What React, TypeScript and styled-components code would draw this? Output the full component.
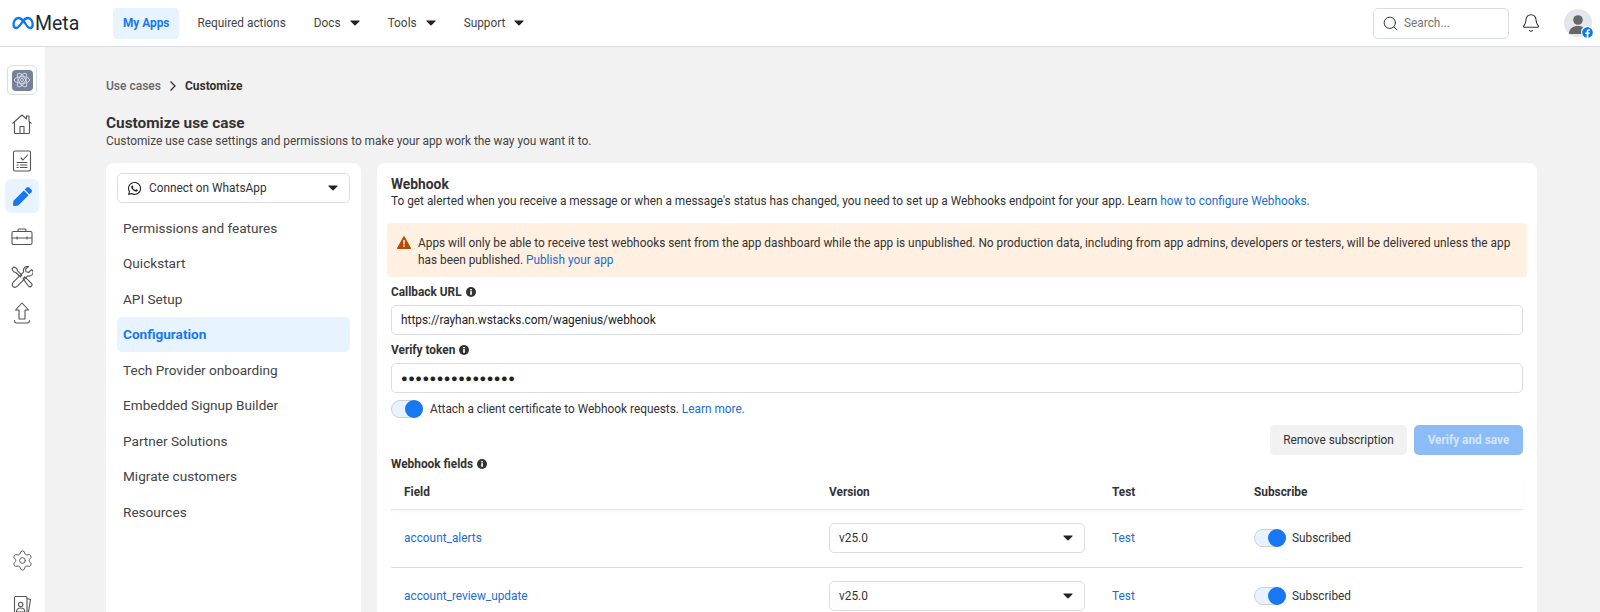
import styled, { createGlobalStyle } from 'styled-components';
import { Bell, Search, Settings } from 'lucide-react';
import { FaFacebook, FaPen, FaWhatsapp } from 'react-icons/fa';

const menuItems = [
  'Permissions and features',
  'Quickstart',
  'API Setup',
  'Configuration',
  'Tech Provider onboarding',
  'Embedded Signup Builder',
  'Partner Solutions',
  'Migrate customers',
  'Resources',
];

const fields = ['account_alerts', 'account_review_update'];

const GlobalStyle = createGlobalStyle`
  html, body {
    margin: 0;
    height: 100%;
    overflow: hidden;
    background: #f2f2f2;
  }
  * {
    box-sizing: border-box;
  }
  body {
    font-family: Roboto, 'Liberation Sans', sans-serif;
    color: #333;
  }
`;

const Caret = () => (
  <CaretIcon viewBox="0 0 12 7" width="10" height="6">
    <path d="M1 0.6h10c.5 0 .7.5.4.9L6.6 6.2c-.3.3-.9.3-1.2 0L.6 1.5C.3 1.1.5.6 1 .6z" fill="currentColor" />
  </CaretIcon>
);

const Info = () => (
  <InfoIcon viewBox="0 0 12 12" width="10" height="10">
    <circle cx="6" cy="6" r="6" fill="#333" />
    <rect x="5" y="5" width="2" height="4.4" fill="#fff" />
    <rect x="5" y="2.400" width="2" height="1.700" fill="#fff" />
  </InfoIcon>
);

const MetaLogo = () => (
  <LogoRow>
    <svg viewBox="0 0 22 14" width="22" height="14" fill="none">
      <path
        d="M6 2C3.500 2 1.500 5.500 1.500 8.500 1.500 10.800 2.700 12 4.300 12 6.500 12 8 9.500 11 5 13 2.300 14.300 2 16 2c2.800 0 4.700 3.500 4.700 6.700 0 2-1 3.300-2.700 3.300-2 0-3.500-2.500-5-5C10.500 3.500 8.500 2 6 2z"
        stroke="#0a78f0"
        strokeWidth="2.300"
        strokeLinejoin="round"
      />
    </svg>
    <LogoText>Meta</LogoText>
  </LogoRow>
);

const App = () => {
  return (
    <>
      <GlobalStyle />
      <Page>
        <TopBar>
          <MetaLogo />
          <Nav>
            <NavItem $active>My Apps</NavItem>
            <NavItem>Required actions</NavItem>
            <NavItem>
              Docs <Caret />
            </NavItem>
            <NavItem>
              Tools <Caret />
            </NavItem>
            <NavItem>
              Support <Caret />
            </NavItem>
          </Nav>
          <TopRight>
            <SearchBox>
              <Search size={17} strokeWidth={1.4} color="#333" />
              <span>Search...</span>
            </SearchBox>
            <Bell size={20} strokeWidth={1.3} color="#333" />
            <Avatar>
              <svg viewBox="0 0 28 28" width="28" height="28">
                <circle cx="14" cy="11" r="4.800" fill="#65676b" />
                <path d="M5 25c0-5.500 4-8 9-8s9 2.500 9 8z" fill="#65676b" />
              </svg>
              <AvatarBadge>
                <FaFacebook size={11} color="#0a78f0" />
              </AvatarBadge>
            </Avatar>
          </TopRight>
        </TopBar>
        <Body>
          <SideRail>
            <AppTile>
              <AppTileInner>
                <svg viewBox="0 0 20 20" width="18" height="18" fill="none" stroke="#d3d6de" strokeWidth="1.100">
                  <ellipse cx="10" cy="10" rx="8.500" ry="3.700" />
                  <ellipse cx="10" cy="10" rx="8.500" ry="3.700" transform="rotate(60 10 10)" />
                  <ellipse cx="10" cy="10" rx="8.500" ry="3.700" transform="rotate(120 10 10)" />
                  <circle cx="10" cy="10" r="1.700" />
                </svg>
              </AppTileInner>
            </AppTile>
            <RailList>
              <RailButton $after={3}>
                <svg viewBox="0 0 22 22" width="22" height="22" fill="none" stroke="#555" strokeWidth="1.100" strokeLinejoin="round">
                  <path d="M1.500 10.500 11 2l4.500 4V3h2.500v5.300l2.500 2.200" />
                  <path d="M3.500 9v10.500c0 .6.4 1 1 1h13c.6 0 1-.4 1-1V9" />
                  <path d="M9 20.500V13.500h4v7" />
                </svg>
              </RailButton>
              <RailButton $after={1}>
                <svg viewBox="0 0 22 22" width="22" height="22" fill="none" stroke="#555" strokeWidth="1.100" strokeLinecap="round" strokeLinejoin="round">
                  <rect x="2.500" y="1" width="17" height="20" rx="1.500" />
                  <path d="m10 8 2 2 4.500-5" />
                  <path d="M6 12.500h10M9.500 15h6.500M9.500 17.500h6.500M6 15h1.200M6 17.500h1.200" />
                </svg>
              </RailButton>
              <RailButton $active $after={7}>
                <FaPen size={19} color="#1877f2" />
              </RailButton>
              <RailButton $after={6}>
                <svg viewBox="0 0 22 22" width="22" height="22" fill="none" stroke="#555" strokeWidth="1.100" strokeLinejoin="round">
                  <rect x="1" y="5.500" width="20" height="13" rx="1.500" />
                  <path d="M7 5.500V4c0-.6.4-1 1-1h6c.6 0 1 .4 1 1v1.500" />
                  <path d="M1 12h20M6 10.500v3M16 10.500v3" />
                </svg>
              </RailButton>
              <RailButton $after={2}>
                <svg viewBox="0 0 22 22" width="22" height="22" fill="none" stroke="#555" strokeWidth="1.100" strokeLinejoin="round">
                  <path d="M2.800 1 1 2.800l1.500 3 2.300.7 4.400 4.400 1.700-1.700-4.400-4.400-.7-2.300z" />
                  <path d="m12 12.600 1.800-1.800 6.400 6.400c1 1 1 2.200.2 3s-2 .8-3-.2z" />
                  <path d="M20.500 3.600 17.600 6.500l-2.400-.7-.7-2.400 2.900-2.900c-2.500-.6-5 1.200-5 3.700 0 .6.100 1.100.3 1.600L2.600 15.900c-.5-.1.1 0 0 0-1.500 1.700-1.700 3.400-.6 4.600 1.200 1.200 3 .9 4.600-.6l10.100-10.100c.5.200 1 .3 1.600.3 2.500 0 4.300-2.500 3.700-5z" />
                </svg>
              </RailButton>
              <RailButton>
                <svg viewBox="0 0 22 22" width="22" height="22" fill="none" stroke="#555" strokeWidth="1.100" strokeLinejoin="round" strokeLinecap="round">
                  <path d="M11 1 4.500 8H8v9h6V8h3.500z" />
                  <path d="M3.500 18.500c0 1.500.8 2.500 2 2.500h11c1.200 0 2-1 2-2.500" />
                </svg>
              </RailButton>
            </RailList>
            <RailBottom>
              <RailButton>
                <Settings size={23} strokeWidth={1} color="#555" />
              </RailButton>
              <RailButton>
                <svg viewBox="0 0 22 22" width="22" height="22" fill="none" stroke="#555" strokeWidth="1.100" strokeLinejoin="round">
                  <path d="M16 3.500 19.500 4.500 17 20" />
                  <rect x="3.500" y="1.500" width="12.500" height="19.500" rx="1.200" />
                  <circle cx="9.700" cy="9.500" r="2.200" />
                  <path d="M5.500 17c0-2.500 1.800-4 4.200-4s4.200 1.500 4.200 4z" />
                </svg>
              </RailButton>
            </RailBottom>
          </SideRail>
          <Main>
            <Breadcrumb>
              <span>Use cases</span>
              <BreadcrumbChevron viewBox="0 0 8 12" width="8" height="12">
                <path d="m1.500 1.500 4.500 4.500-4.500 4.500" fill="none" stroke="#333" strokeWidth="1.300" />
              </BreadcrumbChevron>
              <strong>Customize</strong>
            </Breadcrumb>
            <PageTitle>Customize use case</PageTitle>
            <PageSubtitle>Customize use case settings and permissions to make your app work the way you want it to.</PageSubtitle>
            <Columns>
              <MenuCard>
                <UseCaseSelect>
                  <FaWhatsapp size={15} color="#222" />
                  <span>Connect on WhatsApp</span>
                  <Caret />
                </UseCaseSelect>
                <MenuList>
                  {menuItems.map((item) => (
                    <MenuItem key={item} $active={item === 'Configuration'}>
                      {item}
                    </MenuItem>
                  ))}
                </MenuList>
              </MenuCard>
              <ContentCard>
                <SectionTitle>Webhook</SectionTitle>
                <SectionText>
                  To get alerted when you receive a message or when a message's status has changed, you need to set up a
                  Webhooks endpoint for your app. Learn <Link>how to configure Webhooks</Link>.
                </SectionText>
                <Warning>
                  <svg viewBox="0 0 14 13" width="14" height="13">
                    <path d="M7 .5 13.700 12.500H.3z" fill="#b84a00" stroke="#b84a00" strokeLinejoin="round" />
                    <rect x="6.300" y="4" width="1.400" height="4.500" fill="#fff" />
                    <rect x="6.300" y="9.300" width="1.400" height="1.500" fill="#fff" />
                  </svg>
                  <p>
                    Apps will only be able to receive test webhooks sent from the app dashboard while the app is
                    unpublished. No production data, including from app admins, developers or testers, will be delivered
                    unless the app has been published. <Link>Publish your app</Link>
                  </p>
                </Warning>
                <FieldLabel>
                  Callback URL <Info />
                </FieldLabel>
                <TextBox>https://rayhan.wstacks.com/wagenius/webhook</TextBox>
                <FieldLabel>
                  Verify token <Info />
                </FieldLabel>
                <TextBox $secret>●●●●●●●●●●●●●●●●</TextBox>
                <CertRow>
                  <Toggle />
                  <span>
                    Attach a client certificate to Webhook requests. <Link>Learn more.</Link>
                  </span>
                </CertRow>
                <ButtonRow>
                  <GreyButton>Remove subscription</GreyButton>
                  <BlueButton>Verify and save</BlueButton>
                </ButtonRow>
                <FieldsLabel>
                  Webhook fields <Info />
                </FieldsLabel>
                <TableHead>
                  <span>Field</span>
                  <span>Version</span>
                  <span>Test</span>
                  <span>Subscribe</span>
                </TableHead>
                {fields.map((field) => (
                  <TableRow key={field}>
                    <Link>{field}</Link>
                    <VersionSelect>
                      <span>v25.0</span>
                      <Caret />
                    </VersionSelect>
                    <Link>Test</Link>
                    <SubscribeCell>
                      <Toggle />
                      <span>Subscribed</span>
                    </SubscribeCell>
                  </TableRow>
                ))}
              </ContentCard>
            </Columns>
          </Main>
        </Body>
      </Page>
    </>
  );
};

export default App;

const Page = styled.div`
  height: 100vh;
  display: flex;
  flex-direction: column;
  overflow: hidden;
`;

const TopBar = styled.header`
  flex: none;
  height: 47px;
  display: flex;
  align-items: center;
  padding: 0 8px 0 12px;
  background: #fff;
  border-bottom: 1px solid #dadde1;
`;

const LogoRow = styled.div`
  width: 101px;
  display: flex;
  align-items: center;
  gap: 1px;
`;

const LogoText = styled.span`
  font-size: 19.5px;
  font-weight: 400;
  color: #1c2b33;
`;

const Nav = styled.nav`
  display: flex;
  align-items: center;
  gap: 8px;
`;

const NavItem = styled.div<{ $active?: boolean }>`
  height: 31px;
  display: flex;
  align-items: center;
  gap: 9px;
  padding: 0 10px;
  border-radius: 4px;
  font-size: 11.85px;
  font-weight: ${(p) => (p.$active ? 700 : 400)};
  color: ${(p) => (p.$active ? '#1877f2' : '#444')};
  background: ${(p) => (p.$active ? '#e7f3ff' : 'transparent')};
`;

const CaretIcon = styled.svg`
  flex: none;
  color: #222;
`;

const TopRight = styled.div`
  margin-left: auto;
  display: flex;
  align-items: center;
`;

const SearchBox = styled.div`
  width: 136px;
  height: 31px;
  display: flex;
  align-items: center;
  gap: 5px;
  padding: 0 8px;
  margin-right: 12px;
  border: 1px solid #dadde1;
  border-radius: 5px;
  font-size: 11.85px;
  color: #777;
`;

const Avatar = styled.div`
  position: relative;
  width: 28px;
  height: 28px;
  margin-left: 23px;
  border-radius: 50%;
  background: #e4e6eb;
  svg {
    display: block;
  }
`;

const AvatarBadge = styled.span`
  position: absolute;
  right: -1px;
  bottom: -1px;
  width: 12px;
  height: 12px;
  display: flex;
  align-items: center;
  justify-content: center;
  border-radius: 50%;
  background: #fff;
`;

const Body = styled.div`
  flex: 1;
  min-height: 0;
  display: flex;
`;

const SideRail = styled.aside`
  flex: none;
  width: 45px;
  display: flex;
  flex-direction: column;
  align-items: flex-start;
  padding: 18px 0 0 5px;
  background: #fff;
`;

const AppTile = styled.div`
  width: 30px;
  height: 30px;
  margin-left: 2px;
  display: flex;
  align-items: center;
  justify-content: center;
  border: 1px solid #dadde1;
  border-radius: 5px;
`;

const AppTileInner = styled.div`
  width: 21px;
  height: 21px;
  display: flex;
  align-items: center;
  justify-content: center;
  border-radius: 4px;
  background: #78819b;
`;

const RailList = styled.div`
  display: flex;
  flex-direction: column;
  margin-top: 12px;
`;

const RailButton = styled.div<{ $active?: boolean; $after?: number }>`
  width: 34px;
  height: 34px;
  display: flex;
  align-items: center;
  justify-content: center;
  margin-bottom: ${(p) => p.$after ?? 2}px;
  border-radius: 6px;
  background: ${(p) => (p.$active ? '#e7f3ff' : 'transparent')};
`;

const RailBottom = styled.div`
  margin-top: auto;
  margin-bottom: -13px;
  display: flex;
  flex-direction: column;
  gap: 10px;
`;

const Main = styled.main`
  flex: 1;
  min-width: 0;
  padding: 31px 63px 0 61px;
`;

const Breadcrumb = styled.div`
  display: flex;
  align-items: center;
  gap: 8px;
  font-size: 12px;
  line-height: 16px;
  font-weight: 500;
  color: #65676b;
  strong {
    font-weight: 700;
    color: #333;
  }
`;

const BreadcrumbChevron = styled.svg`
  flex: none;
`;

const PageTitle = styled.h1`
  margin: 19px 0 0;
  font-size: 15.4px;
  line-height: 20px;
  font-weight: 700;
  color: #333;
`;

const PageSubtitle = styled.p`
  margin: 0;
  font-size: 11.88px;
  line-height: 16px;
  color: #444;
`;

const Columns = styled.div`
  display: grid;
  grid-template-columns: 255px 1fr;
  gap: 16px;
  margin-top: 14px;
`;

const MenuCard = styled.section`
  height: 600px;
  padding: 10px 11px;
  background: #fff;
  border-radius: 8px;
`;

const UseCaseSelect = styled.div`
  height: 30px;
  display: flex;
  align-items: center;
  gap: 7px;
  padding: 0 11px 0 9px;
  border: 1px solid #dadde1;
  border-radius: 5px;
  font-size: 11.85px;
  color: #333;
  span {
    flex: 1;
  }
`;

const MenuList = styled.div`
  margin-top: 7px;
  display: flex;
  flex-direction: column;
`;

const MenuItem = styled.div<{ $active?: boolean }>`
  height: 35.5px;
  display: flex;
  align-items: center;
  padding: 0 6px;
  border-radius: 5px;
  font-size: 13.6px;
  font-weight: ${(p) => (p.$active ? 700 : 400)};
  color: ${(p) => (p.$active ? '#1877f2' : '#444')};
  background: ${(p) => (p.$active ? '#e7f3ff' : 'transparent')};
`;

const ContentCard = styled.section`
  min-height: 600px;
  padding: 12px 14px;
  background: #fff;
  border-radius: 8px;
`;

const SectionTitle = styled.h2`
  margin: 0;
  font-size: 13.8px;
  line-height: 18px;
  font-weight: 700;
  color: #333;
`;

const SectionText = styled.p`
  margin: 0;
  font-size: 11.85px;
  line-height: 16px;
  color: #333;
`;

const Link = styled.span`
  color: #1d6bd6;
`;

const Warning = styled.div`
  margin: 14px -4px 0;
  height: 54px;
  display: flex;
  gap: 7px;
  padding: 12px 10px 0;
  border-radius: 4px;
  background: #fff0e1;
  svg {
    flex: none;
    margin-top: 1px;
  }
  p {
    margin: 0;
    font-size: 11.85px;
    line-height: 17px;
    color: #333;
  }
`;

const FieldLabel = styled.div`
  height: 16px;
  margin-top: 7px;
  display: flex;
  align-items: center;
  gap: 4px;
  font-size: 11.85px;
  font-weight: 700;
  color: #333;
`;

const InfoIcon = styled.svg`
  flex: none;
`;

const TextBox = styled.div<{ $secret?: boolean }>`
  height: 30px;
  margin-top: 5px;
  display: flex;
  align-items: center;
  padding: 0 9px;
  border: 1px solid #dadde1;
  border-radius: 5px;
  font-size: ${(p) => (p.$secret ? '11px' : '11.85px')};
  letter-spacing: ${(p) => (p.$secret ? '0.5px' : '0')};
  color: #222;
`;

const CertRow = styled.div`
  margin-top: 6px;
  height: 19px;
  display: flex;
  align-items: center;
  gap: 7px;
  font-size: 11.85px;
  color: #333;
`;

const Toggle = styled.span`
  position: relative;
  flex: none;
  display: block;
  width: 32px;
  height: 18px;
  border: 1px solid #ccd0d5;
  border-radius: 9px;
  background: #e7f3ff;
  &::after {
    content: '';
    position: absolute;
    top: -1px;
    right: -1px;
    width: 18px;
    height: 18px;
    border-radius: 50%;
    background: #1877f2;
  }
`;

const ButtonRow = styled.div`
  margin-top: 7px;
  display: flex;
  justify-content: flex-end;
  gap: 7px;
`;

const GreyButton = styled.div`
  width: 137px;
  height: 30px;
  display: flex;
  align-items: center;
  justify-content: center;
  border-radius: 5px;
  font-size: 11.85px;
  color: #333;
  background: #f2f2f2;
`;

const BlueButton = styled(GreyButton)`
  width: 109px;
  font-weight: 700;
  color: #d5e6fc;
  background: #8cbcf8;
`;

const FieldsLabel = styled(FieldLabel)`
  margin-top: 1px;
`;

const tableColumns = '425px 283px 142px 1fr';

const TableHead = styled.div`
  display: grid;
  grid-template-columns: ${tableColumns};
  height: 35px;
  align-items: center;
  padding-left: 13px;
  margin-top: 3px;
  font-size: 11.85px;
  font-weight: 700;
  color: #333;
  border-bottom: 1px solid #e4e6ea;
  box-shadow: 0 2px 3px -1px rgba(0, 0, 0, 0.05);
`;

const TableRow = styled.div`
  display: grid;
  grid-template-columns: ${tableColumns};
  height: 58px;
  align-items: center;
  padding: 0 0 2px 13px;
  font-size: 11.85px;
  color: #333;
  border-bottom: 1px solid #dadde1;
`;

const VersionSelect = styled.div`
  width: 256px;
  height: 30px;
  display: flex;
  align-items: center;
  justify-content: space-between;
  padding: 0 11px 0 9px;
  border: 1px solid #dadde1;
  border-radius: 5px;
  font-size: 11.85px;
`;

const SubscribeCell = styled.div`
  display: flex;
  align-items: center;
  gap: 6px;
`;
